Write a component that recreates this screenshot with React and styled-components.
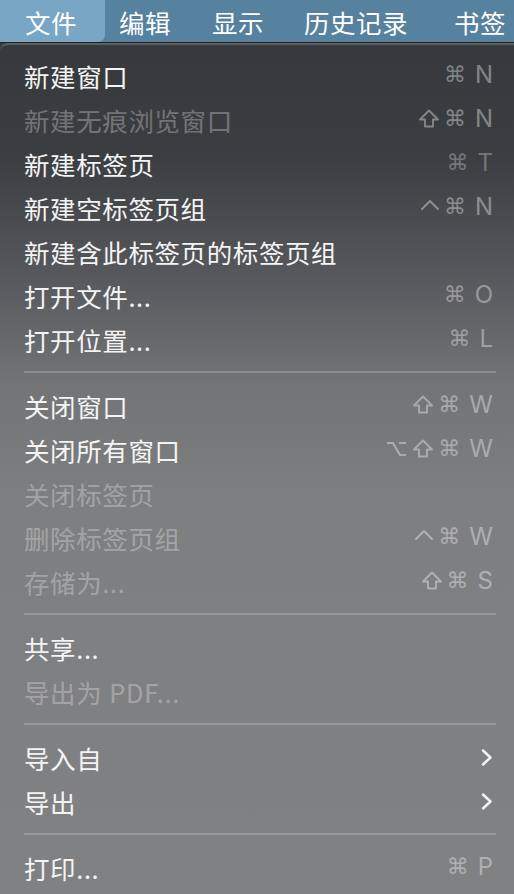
import React from "react";
import styled, { createGlobalStyle } from "styled-components";

const Global = createGlobalStyle`
  html, body {
    margin: 0;
    padding: 0;
    background: #37393c;
  }

  body {
    width: 514px;
    height: 894px;
    overflow: hidden;
    font-family: "Noto Sans CJK SC", "Noto Sans", sans-serif;
    -webkit-font-smoothing: antialiased;
  }
`;

const Screen = styled.div`
  display: flex;
  flex-direction: column;
  width: 514px;
  height: 894px;
`;

const MenuBar = styled.nav`
  display: flex;
  align-items: stretch;
  height: 42px;
  flex: none;
  background: #56819f;
  border-bottom: 1px solid #1e2225;
`;

const BarItem = styled.div`
  display: flex;
  align-items: center;
  padding: 0 ${({ right }) => right || 0}px 0 ${({ left }) => left || 0}px;
  font-size: 25.5px;
  letter-spacing: 0.5px;
  color: #ffffff;
  white-space: nowrap;
  ${({ active }) => active && `
    background: #79a6c4;
    border-bottom-right-radius: 7px;
  `}
`;

const Panel = styled.div`
  flex: 1;
  display: flex;
  flex-direction: column;
  padding-top: 8px;
  border-top: 2px solid #5d6063;
  border-top-left-radius: 8px;
  background: linear-gradient(
    180deg,
    #37393c 0px,
    #3b3e41 110px,
    #56585b 230px,
    #727476 340px,
    #7e7f81 460px,
    #808183 100%
  );
`;

const Row = styled.div`
  display: flex;
  align-items: center;
  justify-content: space-between;
  height: 44px;
  padding: 0 21px 0 24px;
  flex: none;
`;

const Label = styled.span`
  font-size: 25.5px;
  letter-spacing: 0.6px;
  color: ${({ disabled }) => (disabled ? "rgba(255,255,255,0.30)" : "#f4f4f4")};
  white-space: nowrap;
`;

const Keys = styled.span`
  display: flex;
  align-items: center;
  gap: 4px;
  color: ${({ dim }) => (dim ? "rgba(255,255,255,0.3)" : "rgba(255,255,255,0.38)")};
`;

const Glyph = styled.span`
  font-family: "DejaVu Sans", "Noto Sans", sans-serif;
  font-size: 22px;
  line-height: 1;
`;

const Letter = styled.span`
  font-family: "Inter", "Noto Sans", sans-serif;
  font-size: 24px;
  line-height: 1;
  margin-left: 5px;
`;

const Separator = styled.div`
  height: 22px;
  flex: none;
  display: flex;
  align-items: center;
  padding: 0 18px 0 24px;

  &::after {
    content: "";
    flex: 1;
    height: 2px;
    background: rgba(255, 255, 255, 0.2);
  }
`;

const Chevron = () => (
  <svg width="13" height="19" viewBox="0 0 13 19">
    <path
      d="M3 2.5 L10.5 9.5 L3 16.5"
      fill="none"
      stroke="#f2f2f2"
      strokeWidth="2.5"
      strokeLinecap="round"
      strokeLinejoin="round"
    />
  </svg>
);

const ShiftIcon = () => (
  <svg width="22" height="22" viewBox="0 0 22 22">
    <path
      d="M11 2.5 L20 11.5 H15 V18.5 H7 V11.5 H2 Z"
      fill="none"
      stroke="currentColor"
      strokeWidth="1.9"
      strokeLinejoin="round"
    />
  </svg>
);

const CtrlIcon = () => (
  <svg width="20" height="22" viewBox="0 0 20 22">
    <path
      d="M2 13 L10 5 L18 13"
      fill="none"
      stroke="currentColor"
      strokeWidth="2.1"
      strokeLinecap="round"
      strokeLinejoin="round"
    />
  </svg>
);

const OptIcon = () => (
  <svg width="22" height="22" viewBox="0 0 22 22">
    <path
      d="M1 5 H7 L14 17 H20 M13 5 H20"
      fill="none"
      stroke="currentColor"
      strokeWidth="2.1"
    />
  </svg>
);

const glyphs = {
  shift: <ShiftIcon />,
  ctrl: <CtrlIcon />,
  opt: <OptIcon />,
  cmd: <Glyph>⌘</Glyph>,
};

const groups = [
  [
    { label: "新建窗口", keys: ["cmd"], key: "N" },
    { label: "新建无痕浏览窗口", disabled: true, keys: ["shift", "cmd"], key: "N" },
    { label: "新建标签页", keys: ["cmd"], key: "T", dim: true },
    { label: "新建空标签页组", keys: ["ctrl", "cmd"], key: "N" },
    { label: "新建含此标签页的标签页组" },
    { label: "打开文件...", keys: ["cmd"], key: "O" },
    { label: "打开位置...", keys: ["cmd"], key: "L" },
  ],
  [
    { label: "关闭窗口", keys: ["shift", "cmd"], key: "W" },
    { label: "关闭所有窗口", keys: ["opt", "shift", "cmd"], key: "W" },
    { label: "关闭标签页", disabled: true },
    { label: "删除标签页组", disabled: true, keys: ["ctrl", "cmd"], key: "W" },
    { label: "存储为...", disabled: true, keys: ["shift", "cmd"], key: "S" },
  ],
  [
    { label: "共享..." },
    { label: "导出为\u2005PDF...", disabled: true },
  ],
  [
    { label: "导入自", submenu: true },
    { label: "导出", submenu: true },
  ],
  [{ label: "打印...", keys: ["cmd"], key: "P" }],
];

const MenuRow = ({ item }) => (
  <Row>
    <Label disabled={item.disabled}>{item.label}</Label>
    {item.key && (
      <Keys dim={item.dim}>
        {item.keys.map((k, i) => (
          <React.Fragment key={i}>{glyphs[k]}</React.Fragment>
        ))}
        <Letter>{item.key}</Letter>
      </Keys>
    )}
    {item.submenu && <Chevron />}
  </Row>
);

export default function App() {
  return (
    <Screen>
      <Global />
      <MenuBar>
        <BarItem active left={25} right={28}>文件</BarItem>
        <BarItem left={14}>编辑</BarItem>
        <BarItem left={41}>显示</BarItem>
        <BarItem left={40}>历史记录</BarItem>
        <BarItem left={46}>书签</BarItem>
      </MenuBar>
      <Panel>
        {groups.map((group, gi) => (
          <React.Fragment key={gi}>
            {gi > 0 && <Separator />}
            {group.map((item) => (
              <MenuRow key={item.label} item={item} />
            ))}
          </React.Fragment>
        ))}
      </Panel>
    </Screen>
  );
}
